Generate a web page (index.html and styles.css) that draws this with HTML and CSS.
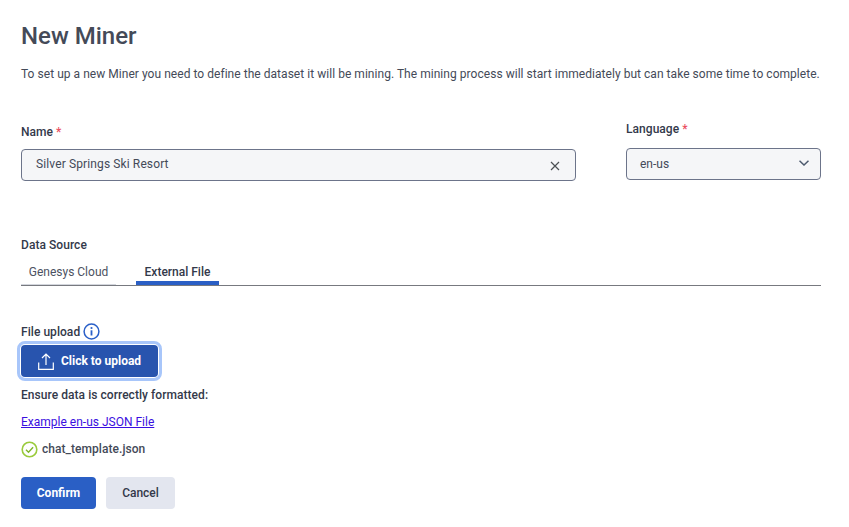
FILE: index.html
```html
<!DOCTYPE html>
<html lang="en">
<head>
<meta charset="utf-8">
<title>New Miner</title>
<link rel="stylesheet" href="styles.css">
</head>
<body>
<main class="page">
  <h1 class="title">New Miner</h1>
  <p class="intro">To set up a new Miner you need to define the dataset it will be mining. The mining process will start immediately but can take some time to complete.</p>
  <div class="fields">
    <div class="field field-name">
      <label class="label">Name <span class="req">*</span></label>
      <div class="input">
        <span class="value-wide">Silver Springs Ski Resort</span>
        <svg class="clear" width="10" height="10" viewBox="0 0 10 10"><path d="M1 1l8 8M9 1L1 9" stroke="#4c5054" stroke-width="1.2" fill="none"/></svg>
      </div>
    </div>
    <div class="field field-lang">
      <label class="label">Language <span class="req">*</span></label>
      <div class="input">
        <span>en-us</span>
        <svg class="chev" width="10" height="6" viewBox="0 0 10 6"><path d="M.5.7L5 5l4.500-4.300" stroke="#4c5a6e" stroke-width="1.5" fill="none"/></svg>
      </div>
    </div>
  </div>
  <div class="label source">Data Source</div>
  <div class="tabs">
    <div class="tab tab-idle">Genesys Cloud</div>
    <div class="tab tab-active">External File</div>
  </div>
  <div class="upload-label">
    <span class="label">File upload</span>
    <svg width="17" height="17" viewBox="0 0 17 17"><circle cx="8.500" cy="8.500" r="7.400" fill="none" stroke="#2a60c8" stroke-width="1.500"/><circle cx="8.500" cy="5" r="1.100" fill="#2a60c8"/><path d="M8.500 7.300v5.200" stroke="#2a60c8" stroke-width="1.800"/></svg>
  </div>
  <button class="upload">
    <svg width="16" height="17" viewBox="0 0 16 17"><path d="M8 12V1.500M4 5l4-4 4 4M.7 9.500v6.800h14.600V9.500" fill="none" stroke="#fff" stroke-width="1.200"/></svg>
    Click to upload
  </button>
  <div class="label ensure">Ensure data is correctly formatted:</div>
  <a class="example" href="#">Example en-us JSON File</a>
  <div class="file">
    <svg width="17" height="17" viewBox="0 0 17 17"><circle cx="8.500" cy="8.500" r="7.300" fill="none" stroke="#9acb3c" stroke-width="1.600"/><path d="M5 8.800l2.500 2.400 4.600-5" fill="none" stroke="#7fb52a" stroke-width="1.400"/></svg>
    <span class="file-name">chat_template.json</span>
  </div>
  <div class="actions">
    <button class="btn primary">Confirm</button>
    <button class="btn secondary">Cancel</button>
  </div>
</main>
</body>
</html>
```
FILE: styles.css
```css
* { box-sizing: border-box; }
html, body { margin: 0; background: #fff; }
body { font-family: Roboto, sans-serif; color: #33394a; font-size: 12px; }
.page { width: 849px; height: 527px; padding: 21px 28px 0 21px; overflow: hidden; }
.title { margin: 0; font-size: 24px; line-height: 30px; font-weight: 500; color: #444a58; }
.intro { margin: 15px 0 0; font-size: 12px; line-height: 16px; color: #444a58; white-space: nowrap; letter-spacing: 0.04px; }
.fields { display: flex; justify-content: space-between; align-items: flex-end; margin-top: 39px; }
.field-name { width: 555px; }
.field-lang { width: 195px; margin-bottom: 1px; }
.label { font-size: 12px; line-height: 16px; font-weight: 500; color: #33394a; display: block; letter-spacing: 0.05px; }
.req { color: #ea4f5f; }
.field-name .label { margin-bottom: 9px; }
.field-lang .label { margin-bottom: 11px; }
.input { height: 32px; display: flex; align-items: center; justify-content: space-between; padding: 0 15px 1px 14px; background: #f5f6f8; border: 1px solid #6c748a; border-radius: 4px; font-size: 12px; color: #444a58; }
.value-wide { letter-spacing: 0.12px; margin-top: -2px; }
.field-lang .input { padding-left: 13px; padding-right: 11px; }
.clear { margin-top: 2px; }
.chev { margin-top: -2px; }
.source { margin-top: 56px; }
.tabs { display: flex; height: 33px; border-bottom: 1px solid #77797f; gap: 20px; }
.tab { font-size: 12px; line-height: 16px; padding-top: 11px; text-align: center; }
.tab-idle { width: 95px; color: #4c5262; border-bottom: 1px solid #d3d6dd; }
.tab-active { width: 83px; font-weight: 500; border-bottom: 4px solid #2a5fc5; }
.upload-label { display: flex; align-items: center; gap: 3px; margin-top: 37px; height: 17px; }
.upload { display: flex; align-items: center; gap: 7px; width: 137px; height: 32px; margin-top: 5px; padding: 0 0 0 17px; background: #2854ae; border: 0; border-radius: 4px; outline: 3px solid #a8c6fa; outline-offset: 1px; color: #fff; font: 700 12px Roboto, sans-serif; }
.ensure { margin-top: 10px; }
.example { display: block; margin-top: 11px; font-size: 12px; line-height: 16px; color: #3a0fe0; }
.file { display: flex; align-items: center; gap: 4px; margin-top: 11px; font-size: 12px; font-weight: 500; height: 17px; color: #444a58; letter-spacing: 0.05px; }
.file-name { margin-top: -1px; }
.actions { display: flex; gap: 10px; margin-top: 19px; }
.btn { height: 32px; border: 0; border-radius: 4px; font: 700 12px Roboto, sans-serif; padding: 0; }
.primary { width: 75px; background: #2a5fc5; color: #fff; }
.secondary { width: 69px; background: #e3e6ef; color: #33394a; font-weight: 500; }
```
